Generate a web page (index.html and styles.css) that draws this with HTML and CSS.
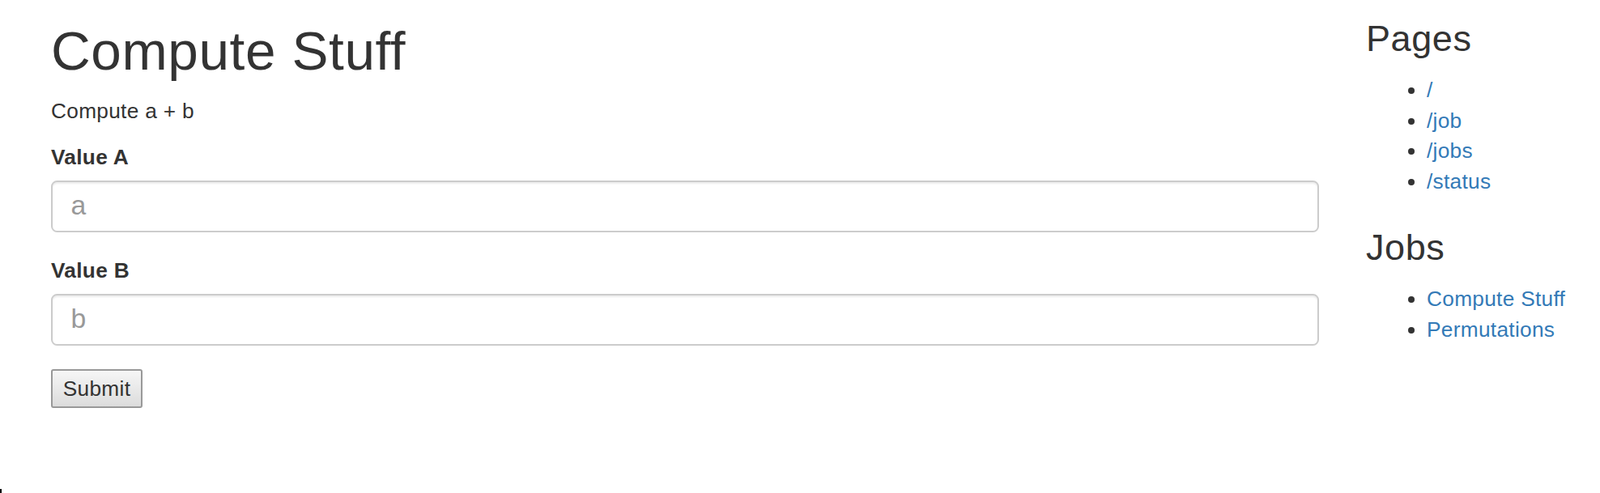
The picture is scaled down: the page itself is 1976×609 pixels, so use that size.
FILE: index.html
```html
<!DOCTYPE html>
<html lang="en">
<head>
<meta charset="utf-8">
<title>Compute Stuff</title>
<link rel="stylesheet" href="styles.css">
</head>
<body>
<div class="page">
  <main class="main">
    <h1 class="title">Compute Stuff</h1>
    <p class="lead-text">Compute a + b</p>
    <form class="form">
      <div class="form-group">
        <label class="label" for="a">Value A</label>
        <input class="input" id="a" type="text" placeholder="a">
      </div>
      <div class="form-group">
        <label class="label" for="b">Value B</label>
        <input class="input" id="b" type="text" placeholder="b">
      </div>
      <button class="submit" type="button">Submit</button>
    </form>
  </main>
  <aside class="sidebar">
    <h3 class="side-title first">Pages</h3>
    <ul class="side-list">
      <li><a href="#">/</a></li>
      <li><a href="#">/job</a></li>
      <li><a href="#">/jobs</a></li>
      <li><a href="#">/status</a></li>
    </ul>
    <h3 class="side-title">Jobs</h3>
    <ul class="side-list">
      <li><a href="#">Compute Stuff</a></li>
      <li><a href="#">Permutations</a></li>
    </ul>
  </aside>
</div>
<span class="corner-mark"></span>
</body>
</html>
```
FILE: styles.css
```css
html, body {
  margin: 0;
  padding: 0;
  background: #fff;
}
body {
  font-family: "Liberation Sans", Arial, Helvetica, sans-serif;
  font-size: 26.25px;
  line-height: 37.5px;
  letter-spacing: 0.3px;
  color: #333;
  height: 609px;
  overflow: hidden;
  position: relative;
}
.page {
  display: flex;
  align-items: flex-start;
  padding-left: 63px;
}
.main {
  width: 1566px;
  flex: none;
}
.title {
  font-size: 67.5px;
  font-weight: 500;
  line-height: 74px;
  letter-spacing: 0.6px;
  margin: 26px 0 18.75px;
}
.lead-text {
  margin: 0 0 19.5px;
}
.form-group {
  margin-bottom: 29px;
}
.label {
  display: block;
  font-weight: 700;
  margin-bottom: 9.4px;
}
.input {
  display: block;
  box-sizing: border-box;
  width: 100%;
  height: 64px;
  padding: 0 22.5px 3px;
  font-family: inherit;
  font-size: 33.75px;
  color: #555;
  background: #fff;
  border: 2px solid #ccc;
  border-radius: 7.5px;
  box-shadow: inset 0 2px 2px rgba(0, 0, 0, 0.075);
  outline: none;
}
.input::placeholder {
  color: #999;
}
.submit {
  display: block;
  box-sizing: border-box;
  width: 113px;
  height: 48px;
  padding: 0;
  font-family: inherit;
  font-size: 26.25px;
  line-height: 30px;
  letter-spacing: 0.3px;
  color: #333;
  background: linear-gradient(#f6f6f6, #dcdcdc);
  border: 2px solid #999;
  border-radius: 3px;
}
.sidebar {
  margin-left: 58px;
  flex: 1;
}
.side-title {
  font-size: 45px;
  font-weight: 500;
  line-height: 49.5px;
  letter-spacing: 0.6px;
  margin: 37.5px 0 21px;
}
.side-title.first {
  margin-top: 22.5px;
}
.side-list {
  margin: 0;
  padding-left: 75px;
}
.side-list a {
  color: #337ab7;
  text-decoration: none;
}
.corner-mark {
  position: absolute;
  left: 0;
  bottom: 0;
  width: 2px;
  height: 5px;
  background: #000;
}
```
